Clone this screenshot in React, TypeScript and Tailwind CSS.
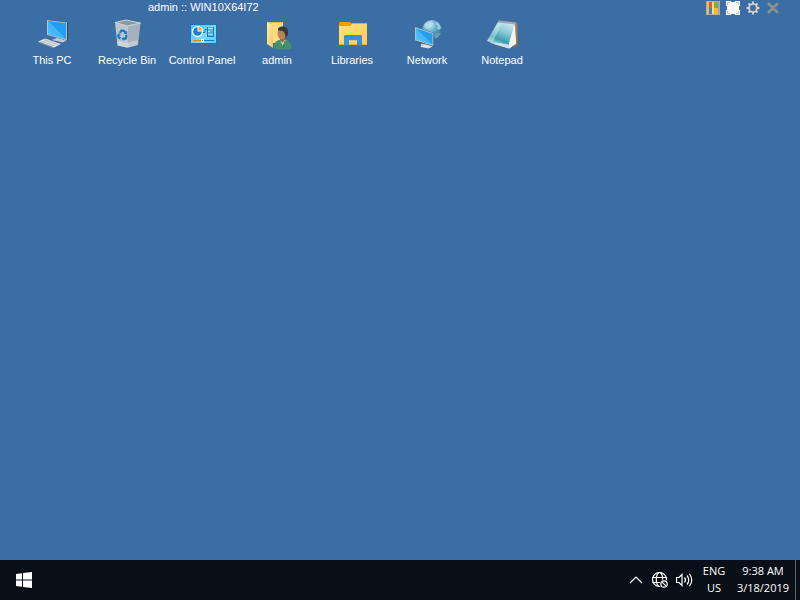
import type { ReactNode } from 'react'

interface Shortcut {
  name: string
  icon: ReactNode
}

const icon = 'block size-8'

function PcIcon() {
  return (
    <svg viewBox="0 0 32 32" className={icon} aria-hidden="true">
      <defs>
        <linearGradient id="pcScreen" x1="0" y1="1" x2="1" y2="0">
          <stop offset="0" stopColor="#58c3ff" />
          <stop offset="0.5" stopColor="#3db2fb" />
          <stop offset="0.52" stopColor="#239cf0" />
          <stop offset="1" stopColor="#1fa0f5" />
        </linearGradient>
      </defs>
      <path d="M16 22l6-2.500 9 2.500-4 2.500z" fill="#c3cad1" />
      <path d="M11 2l21 2.500v18.500l-21-6z" fill="#34414d" />
      <path d="M11 2l20 2.500v18l-20-5.500z" fill="#b4c4cf" />
      <path d="M12 3l18 2.300v15.900l-18-4.700z" fill="url(#pcScreen)" />
      <path d="M2 23.500l7-3 16 5.500-7 3.500z" fill="#dfe3e7" />
      <path d="M2 23.500l16 6v1l-16-6z" fill="#7f8c98" />
      <path d="M5 23l14 5M8 21.500l14 5.200M6 25l7-3.500M10 26.500l7-3.500M14 28l7-3.500" stroke="#a9b2ba" strokeWidth="0.6" fill="none" />
    </svg>
  )
}

function BinIcon() {
  return (
    <svg viewBox="0 0 32 32" className={icon} aria-hidden="true">
      <path d="M4 4.500L15 2l14.500 3-13 3z" fill="#8d98a2" />
      <path d="M4 4.500L16.500 8v21.700L6.500 27.500z" fill="#bcc6cf" />
      <path d="M16.500 8l13-3L27 27l-10.500 2.700z" fill="#a5b0ba" />
      <path d="M6 23l10.500 1.500L27 22l-.5 5-10 2.700-10-2.200z" fill="#dde0e2" opacity="0.55" />
      <path d="M4 4.500L15 2l14.500 3-13 3z" fill="none" stroke="#dde2e6" strokeWidth="0.8" />
      <path d="M16.500 8v21" stroke="#dfe4e8" strokeWidth="0.5" />
      <g fill="none" stroke="#1479cf" strokeWidth="2.200">
        <path d="M8.800 15l1.700-2.500 2.700.5 1 1.500" />
        <path d="M15.500 17l-.7 3.500-2.500.5" />
        <path d="M9.500 20.500l-1.800-1-.4-2.500" />
      </g>
      <path d="M16 13l.2 3.500-3.500-1zM12.800 19v4l-2.300-2.300zM6 17.500l2-2.500 1.800 2.500z" fill="#1479cf" />
    </svg>
  )
}

function ControlPanelIcon() {
  return (
    <svg viewBox="0 0 32 32" className={icon} aria-hidden="true">
      <defs>
        <linearGradient id="cpFace" x1="0" y1="0" x2="1" y2="1">
          <stop offset="0" stopColor="#50c2ff" />
          <stop offset="0.6" stopColor="#7cdaff" />
          <stop offset="1" stopColor="#5ecaf9" />
        </linearGradient>
      </defs>
      <rect x="4" y="6" width="27" height="20" fill="#1778ac" />
      <rect x="5" y="7" width="25" height="18" fill="url(#cpFace)" />
      <circle cx="11.500" cy="13.500" r="5.500" fill="#eef7fc" />
      <circle cx="11.500" cy="13.500" r="4.300" fill="#1c80c4" />
      <path d="M11.500 13.500V8a5.500 5.500 0 0 1 5.500 5.500z" fill="#fff" />
      <path d="M12.500 12.500V9a3.800 3.800 0 0 1 3.500 3.500z" fill="#f7a11b" />
      <path d="M17 14.500h2v-3h2" fill="none" stroke="#177bbd" />
      <rect x="21" y="9" width="7" height="10" fill="#1a7bb9" />
      <path d="M22 10.500h5M22 13.500h5M22 16.500h5" stroke="#a5e2fc" strokeWidth="2" />
      <path d="M24 13.500h3" stroke="#eb9420" />
      <path d="M7 22.500h10" stroke="#e48a16" />
      <path d="M17 22.500h11" stroke="#1879b2" />
      <rect x="15" y="21" width="3" height="3" fill="#fff" />
      <rect x="16" y="22" width="1" height="1" fill="#177bbd" />
    </svg>
  )
}

function UserFolderIcon() {
  return (
    <svg viewBox="0 0 32 32" className={icon} aria-hidden="true">
      <defs>
        <linearGradient id="userFold" x1="0" y1="0" x2="1" y2="1">
          <stop offset="0" stopColor="#fff0a8" />
          <stop offset="1" stopColor="#edc65a" />
        </linearGradient>
      </defs>
      <path d="M6 4h16v21H6z" fill="#e5bc51" />
      <path d="M10 5h12v20H10z" fill="#f8dc83" />
      <path d="M6 4l6 3v23l-6-4z" fill="url(#userFold)" />
      <path d="M19 18h5v6h-5z" fill="#9c603d" />
      <path d="M13 30c0-6 3-8 6-8l3 3 2-4c4 1 6 4 6.500 9-4 2-14 2-17.500 0z" fill="#46916c" />
      <path d="M19 22l2.500 3 2.500-3.500.5 1.500-2.500 5z" fill="#c9dccb" />
      <path d="M24 23l-2 7" stroke="#347c59" />
      <ellipse cx="21" cy="16" rx="4.500" ry="5.500" fill="#b9805a" />
      <path d="M17 12.500c-.5-3 2-4 4.500-4 4 0 6 2.500 5.500 6 0 3-1 4.500-2.500 5.500l-.5-4-2-3z" fill="#3b3a3a" />
    </svg>
  )
}

function LibrariesIcon() {
  return (
    <svg viewBox="0 0 32 32" className={icon} aria-hidden="true">
      <defs>
        <linearGradient id="libFace" x1="0" y1="0" x2="1" y2="1">
          <stop offset="0" stopColor="#ffe080" />
          <stop offset="1" stopColor="#fbcf4f" />
        </linearGradient>
      </defs>
      <path d="M3 5l1-1h10l2 1.500h15V12H3z" fill="#e5a100" />
      <path d="M3 8h11l2.500-2.500H31V27H3z" fill="url(#libFace)" />
      <path d="M3 26h28v1H3z" fill="#e5b537" />
      <path d="M8 27.500V18l1-1h16l1 1v9.500h-5V22h-8v5.500z" fill="#3390df" />
      <path d="M8 22h18" stroke="#4ea6ec" strokeWidth="0.5" />
    </svg>
  )
}

function NetworkIcon() {
  return (
    <svg viewBox="0 0 32 32" className={icon} aria-hidden="true">
      <defs>
        <radialGradient id="netGlobe" cx="0.4" cy="0.25" r="0.8">
          <stop offset="0" stopColor="#c7edf6" />
          <stop offset="0.45" stopColor="#5fa9ca" />
          <stop offset="1" stopColor="#215c80" />
        </radialGradient>
        <linearGradient id="netScreen" x1="0" y1="1" x2="1" y2="0">
          <stop offset="0" stopColor="#5cc7ff" />
          <stop offset="0.5" stopColor="#42b5fa" />
          <stop offset="0.53" stopColor="#229cee" />
          <stop offset="1" stopColor="#28a3f3" />
        </linearGradient>
      </defs>
      <circle cx="21" cy="12" r="10" fill="url(#netGlobe)" />
      <path d="M13 7c2-3 5-4 8-4l1 3-3 1-1 4-4-1zM25 4c3 1 4 3 5 6l-2 2-2-2 1-2-2-2z" fill="#b7dee7" opacity="0.75" />
      <path d="M23 17l4-2 3 0c-1 3-3 5-6 6z" fill="#8fc1d4" opacity="0.5" />
      <path d="M10 26l5-2 7 3-4 3-8-1z" fill="#c4ccd3" />
      <path d="M4 9l19 6v14L4 23z" fill="#2d4252" />
      <path d="M4 9l18.500 6v13L4 22.500z" fill="#a8c3d2" />
      <path d="M5 10.500l16.500 5.300v11L5 21.500z" fill="url(#netScreen)" />
      <path d="M9 28.500l6-2 7 2-5 2z" fill="#dce0e3" />
    </svg>
  )
}

function NotepadIcon() {
  return (
    <svg viewBox="0 0 32 32" className={icon} aria-hidden="true">
      <defs>
        <linearGradient id="notePage" x1="0.8" y1="0" x2="0.3" y2="1">
          <stop offset="0" stopColor="#d3ebf0" />
          <stop offset="0.45" stopColor="#84c6d4" />
          <stop offset="0.75" stopColor="#3a9cb3" />
          <stop offset="1" stopColor="#a3dce6" />
        </linearGradient>
      </defs>
      <path d="M29 4l2.500 1v22L27 29z" fill="#a07c46" />
      <path d="M28 5l2 20-7 5.500L8 26z" fill="#dbe3e7" />
      <path d="M12 4l17 1-6 22L1 23z" fill="url(#notePage)" />
      <path d="M12 4L1 23l6 1 9-20z" fill="#e3f0f3" opacity="0.4" />
      <path d="M29 5l-6.500 22 1 3.500 6.500-5z" fill="#f1f4f5" />
      <path d="M1 23l21.500 4 1 3.500-15.500-4.500z" fill="#d5e3e8" />
      <path d="M12 2.500l18 2v1.500L12 4.500z" fill="#a9b5ba" />
      <path d="M13 2v2.500M15 2v3M17 2v3M19 2.500v3M21 3v2.500M23 3v3M25 3v3M27 3.500v3M29 4v2.500" stroke="#77858b" strokeWidth="0.6" />
    </svg>
  )
}

const shortcuts: Shortcut[] = [
  { name: 'This PC', icon: <PcIcon /> },
  { name: 'Recycle Bin', icon: <BinIcon /> },
  { name: 'Control Panel', icon: <ControlPanelIcon /> },
  { name: 'admin', icon: <UserFolderIcon /> },
  { name: 'Libraries', icon: <LibrariesIcon /> },
  { name: 'Network', icon: <NetworkIcon /> },
  { name: 'Notepad', icon: <NotepadIcon /> }
]

function SessionBar() {
  return (
    <header className="flex h-4 items-start justify-between pl-[148px] pr-5">
      <h1 className="text-[11px] leading-[14px] text-white">admin :: WIN10X64I72</h1>
      <div className="flex gap-[6px] pt-px">
        <button type="button" aria-label="Start menu">
          <svg viewBox="0 0 14 14" className="block size-[14px]">
            <path d="M0 0h14v14H0z" fill="#b9a9a4" />
            <path d="M1 1h6v6H1z" fill="#e8592d" />
            <path d="M1 7h6v6H1z" fill="#3f7fd2" />
            <path d="M7 1h6v6H7z" fill="#76b043" />
            <path d="M7 7h6v6H7z" fill="#f9b92b" />
            <path d="M1 1h2v12H1z" fill="#f5c04a" />
            <path d="M6 1h2v12H6z" fill="#f7dc7c" />
            <path d="M12 1h1v12h-1z" fill="#8aa6d8" />
          </svg>
        </button>
        <button type="button" aria-label="Full screen">
          <svg viewBox="0 0 14 14" className="block size-[14px]">
            <path d="M0 0h14v14H0z" fill="#fff" />
            <path d="M1.500 4V1.500H4M10 1.500h2.500V4M12.500 10v2.500H10M4 12.500H1.500V10" fill="none" stroke="#b9bec4" />
            <path d="M5 0h4v1H5zM5 13h4v1H5zM0 5h1v4H0zM13 5h1v4h-1z" fill="#3b6ea5" />
          </svg>
        </button>
        <button type="button" aria-label="Settings">
          <svg viewBox="0 0 14 14" className="block size-[14px]">
            <g stroke="#d5d1c8" strokeWidth="2">
              <path d="M7 .5v13M.5 7h13M2.500 2.500l9 9M11.500 2.500l-9 9" />
            </g>
            <circle cx="7" cy="7" r="4" fill="#3b6ea5" stroke="#dedad2" strokeWidth="1.600" />
            <circle cx="7" cy="7" r="2.800" fill="#3b6ea5" stroke="#75879b" strokeWidth="0.6" />
          </svg>
        </button>
        <button type="button" aria-label="Close">
          <svg viewBox="0 0 14 14" className="block size-[14px]">
            <path d="M2 2l10 10M12 2L2 12" stroke="#8d8d8b" strokeWidth="2.600" />
          </svg>
        </button>
      </div>
    </header>
  )
}

function Taskbar() {
  return (
    <footer className="flex h-10 items-stretch justify-between bg-[#090f16] text-white">
      <button type="button" aria-label="Start" className="flex w-12 items-center justify-center">
        <svg viewBox="0 0 16 16" className="block size-4">
          <path d="M0 2l6-.8v6.300H0zM7 1l9-1v7.500H7zM0 8.500h6v6.300L0 14zM7 8.500h9V16l-9-1z" fill="#fff" />
        </svg>
      </button>
      <div className="flex items-center">
        <button type="button" aria-label="Show hidden icons" className="mr-2">
          <svg viewBox="0 0 16 16" className="block size-4" fill="none" stroke="#fff" strokeWidth="1.200">
            <path d="M2 11l6-6 6 6" />
          </svg>
        </button>
        <button type="button" aria-label="Network" className="mr-2">
          <svg viewBox="0 0 16 16" className="block size-4" fill="none" stroke="#fff" strokeWidth="1.200">
            <circle cx="7.500" cy="7.500" r="7" />
            <ellipse cx="7.500" cy="7.500" rx="3.200" ry="7" />
            <path d="M.5 5.500h14M.5 10.500h9" />
            <circle cx="12" cy="12" r="4.500" fill="#090f16" stroke="none" />
            <circle cx="12" cy="12" r="3.200" />
            <path d="M9.800 9.800l4.400 4.400" />
          </svg>
        </button>
        <button type="button" aria-label="Volume" className="mr-2">
          <svg viewBox="0 0 17 16" className="block h-4 w-[17px]" fill="none" stroke="#fff" strokeWidth="1.200">
            <path d="M.5 5.500H3l3-3v11l-3-3H.5z" />
            <path d="M8.500 5.500c1.300 1.500 1.300 3.500 0 5M11 3.500c2.300 2.500 2.300 6.500 0 9M13.500 2c3 3.500 3 8.500 0 12" />
          </svg>
        </button>
        <button type="button" className="w-[26px] pb-[2px] text-center font-['Open_Sans',sans-serif] text-[11px] leading-[17px]">
          <span className="block">ENG</span>
          <span className="block">US</span>
        </button>
        <time
          dateTime="2019-03-18T09:38"
          className="ml-2 mr-1 w-14 whitespace-nowrap pb-[2px] text-center font-['Open_Sans',sans-serif] text-[11px] leading-[17px]"
        >
          <span className="block">9:38 AM</span>
          <span className="block">3/18/2019</span>
        </time>
        <button type="button" aria-label="Show desktop" className="w-[5px] self-stretch border-l border-[#60656a]" />
      </div>
    </footer>
  )
}

export default function App() {
  return (
    <div className="flex min-h-screen flex-col bg-[#3b6ea5] font-['Liberation_Sans',Arial,sans-serif]">
      <SessionBar />
      <main className="flex-1">
        <nav aria-label="Desktop" className="flex flex-wrap gap-px pl-[15px] pt-[2px]">
          {shortcuts.map((item) => (
            <button
              key={item.name}
              type="button"
              className="flex w-[74px] flex-col items-center gap-[3px] whitespace-nowrap text-[11px] leading-[14px] text-white"
            >
              {item.icon}
              <span>{item.name}</span>
            </button>
          ))}
        </nav>
      </main>
      <Taskbar />
    </div>
  )
}
